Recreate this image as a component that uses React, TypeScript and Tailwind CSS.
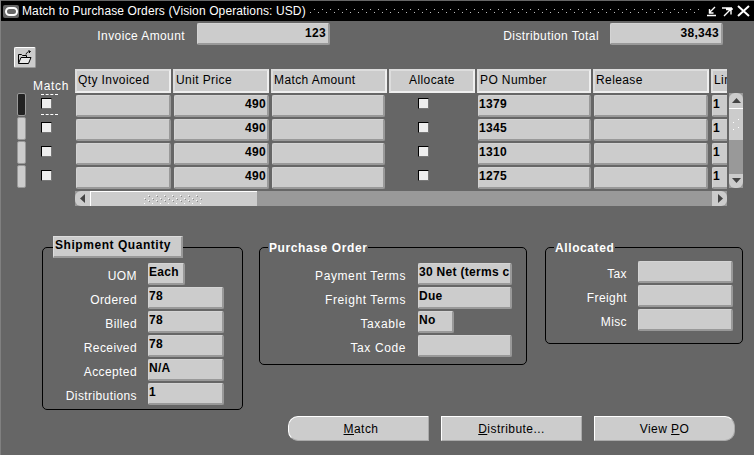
import React from "react";

function Field({ w, text, right, total }: { w: string; text?: string; right?: boolean; total?: boolean }) {
  return (
    <div className={`${w} h-[22px] shrink-0 bg-[#cccccc] border-r-2 border-b-2 border-t border-l border-r-[#999999] border-b-[#999999] border-t-[#d4d4d4] border-l-[#d4d4d4] rounded-[2px] overflow-hidden whitespace-nowrap font-bold text-[12px] tracking-[0.3px] text-black ${total ? "leading-[19px] pr-[2px]" : "leading-[16px]"} ${right ? "text-right" : ""} ${right && !total ? "pr-[1px]" : ""}`}>
      {text}
    </div>
  );
}

function Label({ w, children, wide }: { w: string; children: React.ReactNode; wide?: boolean }) {
  return <div className={`${w} shrink-0 text-right text-white text-[12px] ${wide ? "tracking-[0.6px]" : "tracking-[0.4px]"} leading-[22px] pt-[2px] whitespace-nowrap`}>{children}</div>;
}

function Header({ w, children, center }: { w: string; children: React.ReactNode; center?: boolean }) {
  return (
    <div className={`${w} h-[24px] shrink-0 pr-[2px]`}>
      <div className={`h-full overflow-hidden bg-[#cccccc] border-2 border-[#efefef] border-t-[#dddddd] border-l-[#dddddd] text-black text-[12px] tracking-[0.4px] leading-[18px] whitespace-nowrap ${center ? "text-center" : "pl-[1px]"}`}>{children}</div>
    </div>
  );
}

function Check() {
  return <div className="w-[11px] h-[11px] bg-[#eeeeee] border border-black border-r-[#777777] border-b-[#777777]" />;
}

function Row({ price, po, line }: { price: string; po: string; line: string }) {
  return (
    <div className="flex h-[24px]">
      <div className="w-[98px] pl-[1px]"><Field w="w-[95px]" /></div>
      <div className="w-[98px] pl-[1px]"><Field w="w-[95px]" text={price} right /></div>
      <div className="w-[118px] pl-[1px]"><Field w="w-[113px]" /></div>
      <div className="w-[88px] pl-[29px] pt-[3px]"><Check /></div>
      <div className="w-[116px] pl-[1px]"><Field w="w-[113px]" text={po} /></div>
      <div className="w-[118px] pl-[1px]"><Field w="w-[114px]" /></div>
      <div className="w-[16px] pl-[1px]"><Field w="w-[30px]" text={line} /></div>
    </div>
  );
}

function Indicator({ on }: { on?: boolean }) {
  return <div className={`w-[9px] h-[23px] mb-[1px] rounded-[2px] border border-[#999999] ${on ? "bg-[#222222]" : "bg-[#cccccc]"}`} />;
}

function Group({ w, h, legend, children, pt }: { w: string; h: string; legend: React.ReactNode; children: React.ReactNode; pt: string }) {
  return (
    <div className={`relative ${w} ${h} ${pt} shrink-0 border border-black rounded-[5px]`}>
      {legend}
      {children}
    </div>
  );
}

function Legend({ children, pos }: { children: React.ReactNode; pos: string }) {
  return <div className={`absolute ${pos} -top-[7px] h-[14px] bg-[#666666] px-[1px] font-bold text-white text-[12px] tracking-[0.6px] leading-[14px] whitespace-nowrap`}>{children}</div>;
}

function Grip({ id, w, h }: { id: string; w: number; h: number }) {
  return (
    <svg width={w} height={h} viewBox={`0 0 ${w} ${h}`}>
      <defs>
        <pattern id={id} width="8" height="5" patternUnits="userSpaceOnUse">
          <rect x="0" y="3" width="1" height="1" fill="#ffffff" />
          <rect x="1" y="4" width="1" height="1" fill="#888888" />
          <rect x="4" y="0" width="1" height="1" fill="#ffffff" />
          <rect x="5" y="1" width="1" height="1" fill="#888888" />
        </pattern>
      </defs>
      <rect width={w} height={h} fill={`url(#${id})`} />
    </svg>
  );
}

function Btn({ children, cls }: { children: React.ReactNode; cls: string }) {
  return (
    <div className={`w-[141px] h-[25px] bg-[#cccccc] border-t border-l border-white border-b border-r border-b-[#aaaaaa] border-r-[#aaaaaa] ${cls} flex items-center justify-center text-black text-[12px] tracking-[0.45px]`}>
      {children}
    </div>
  );
}

export default function App() {
  return (
    <div className="w-[754px] h-[455px] overflow-hidden bg-[#666666] flex flex-col border-l border-[#808080]" style={{ fontFamily: '"Liberation Sans", Arial, sans-serif' }}>
      {/* title bar */}
      <div className="mt-[1px] h-[20px] -ml-[1px] bg-black flex items-center shrink-0 text-white text-[12px] tracking-[0.12px] whitespace-nowrap">
        <div className="ml-[3px] w-[16px] h-[13px] bg-[#666666] rounded-[2px] flex items-center justify-center">
          <div className="w-[13px] h-[9px] rounded-[5px] border-2 border-white" />
        </div>
        <span className="ml-[3px]">Match to Purchase Orders (Vision Operations: USD)</span>
        <div className="ml-[4px] w-[392px] h-[8px]">
          <svg width="392" height="8" viewBox="0 0 392 8">
            <defs>
              <pattern id="tb" width="8" height="6" patternUnits="userSpaceOnUse">
                <rect x="0" y="5" width="1" height="1" fill="#bbbbbb" />
                <rect x="4" y="2" width="1" height="1" fill="#bbbbbb" />
              </pattern>
            </defs>
            <rect width="392" height="8" fill="url(#tb)" />
          </svg>
        </div>
        <svg className="ml-auto mr-[4px]" width="46" height="16" viewBox="0 0 46 16" fill="none" stroke="#ffffff" strokeWidth="1.4">
          <path d="M3 12.500h9M11 4l-6 6M5.500 6v4h4" />
          <path d="M18 5h10M28 5v2M20 13l7-7M22 6.500h5v5" />
          <path d="M34 3l11 10M45 3l-11 10" strokeWidth="2" />
        </svg>
      </div>

      {/* totals */}
      <div className="flex mt-[2px] shrink-0">
        <Label w="w-[184px]">Invoice Amount</Label>
        <div className="ml-[12px]"><Field w="w-[133px]" text="123" right total /></div>
        <Label w="w-[269px]">Distribution Total</Label>
        <div className="ml-[11px]"><Field w="w-[113px]" text="38,343" right total /></div>
      </div>

      {/* toolbar */}
      <div className="ml-[13px] w-[22px] h-[21px] shrink-0 bg-[#cccccc] border-t border-l border-white border-b border-r border-b-[#999999] border-r-[#999999] rounded-[2px] flex items-center justify-center">
        <svg width="16" height="15" viewBox="0 0 16 15" fill="none" stroke="#000000" strokeWidth="1">
          <path d="M1.500 13.500v-9h3l1 1h4v2" />
          <path d="M1.500 13.500l2.500-6h10l-2.500 6z" fill="#e8e8e8" />
          <path d="M9 4.500c.5-2 2-3 4-3M11.500 0.500l2 1-1.500 1.500" />
        </svg>
      </div>

      {/* table */}
      <div className="flex items-start mt-[1px] shrink-0">
        <div className="w-[74px] shrink-0">
          <div className="h-[24px] flex items-end pl-[32px] text-white text-[12px] tracking-[0.7px] leading-[14px]">Match</div>
          <div className="flex">
            <div className="ml-[16px] w-[9px]">
              <Indicator on />
              <Indicator />
              <Indicator />
              <Indicator />
            </div>
            <div className="ml-[15px]">
              <div className="h-[24px] relative pt-[5px]">
                <div className="absolute left-0 top-[1px] w-[17px] border-t border-dashed border-white" />
                <div className="absolute left-0 bottom-[2px] w-[17px] border-t border-dashed border-white" />
                <Check />
              </div>
              <div className="h-[24px] pt-[5px]"><Check /></div>
              <div className="h-[24px] pt-[5px]"><Check /></div>
              <div className="h-[24px] pt-[5px]"><Check /></div>
            </div>
          </div>
        </div>
        <div className="w-[652px] shrink-0 overflow-hidden">
          <div className="flex">
            <Header w="w-[98px]">Qty Invoiced</Header>
            <Header w="w-[98px]">Unit Price</Header>
            <Header w="w-[118px]">Match Amount</Header>
            <Header w="w-[88px]" center>Allocate</Header>
            <Header w="w-[116px]">PO Number</Header>
            <Header w="w-[118px]">Release</Header>
            <Header w="w-[40px]">Line</Header>
          </div>
          <div className="mt-[2px]">
            <Row price="490" po="1379" line="1" />
            <Row price="490" po="1345" line="1" />
            <Row price="490" po="1310" line="1" />
            <Row price="490" po="1275" line="1" />
          </div>
          <div className="h-[15px] bg-[#999999] flex">
            <div className="w-[15px] bg-[#cccccc] rounded-l-[6px] flex items-center justify-center">
              <svg width="8" height="9" viewBox="0 0 8 9"><path d="M6 0v9L1 4.500z" fill="#444444" /></svg>
            </div>
            <div className="w-[167px] bg-[#cccccc] border-t border-white border-l flex items-center justify-center">
              <Grip id="gh" w={60} h={9} />
            </div>
            <div className="flex-1" />
            <div className="w-[15px] bg-[#cccccc] rounded-r-[6px] flex items-center justify-center">
              <svg width="8" height="9" viewBox="0 0 8 9"><path d="M2 0v9l5-4.500z" fill="#444444" /></svg>
            </div>
          </div>
        </div>
        <div className="ml-[2px] mt-[24px] w-[14px] h-[95px] bg-[#999999] flex flex-col shrink-0">
          <div className="h-[15px] bg-[#cccccc] rounded-t-[6px] flex items-center justify-center">
            <svg width="9" height="6" viewBox="0 0 9 6"><path d="M0 5h9L4.500 0z" fill="#444444" /></svg>
          </div>
          <div className="h-[32px] bg-[#cccccc] border-t border-white flex items-center justify-center">
            <svg width="6" height="12" viewBox="0 0 6 12" fill="#ffffff">
              <rect x="5" y="0" width="1" height="1" />
              <rect x="0" y="3" width="1" height="1" />
              <rect x="5" y="8" width="1" height="1" />
              <rect x="0" y="10" width="1" height="1" />
            </svg>
          </div>
          <div className="flex-1" />
          <div className="h-[14px] bg-[#cccccc] rounded-b-[6px] flex items-center justify-center">
            <svg width="9" height="6" viewBox="0 0 9 6"><path d="M0 0h9L4.500 5z" fill="#444444" /></svg>
          </div>
        </div>
      </div>

      {/* groups */}
      <div className="flex items-start mt-[41px] ml-[41px] shrink-0">
        <Group w="w-[201px]" h="h-[163px]" pt="pt-[15px]" legend={
          <div className="absolute left-[10px] -top-[12px] w-[130px] h-[22px] bg-[#cccccc] border-r-2 border-b-2 border-r-[#999999] border-b-[#999999] border-t border-l border-t-[#dddddd] border-l-[#dddddd] font-bold text-black text-[12px] tracking-[0.55px] leading-[17px] pl-[1px] whitespace-nowrap z-10">Shipment Quantity</div>
        }>
          {[["UOM", "Each"], ["Ordered", "78"], ["Billed", "78"], ["Received", "78"], ["Accepted", "N/A"], ["Distributions", "1"]].map(([l, v], i) => (
            <div key={l} className="flex h-[24px]">
              <Label w="w-[94px]">{l}</Label>
              <div className="ml-[11px]"><Field w={i === 0 ? "w-[37px]" : "w-[76px]"} text={v} /></div>
            </div>
          ))}
        </Group>
        <div className="ml-[16px]">
          <Group w="w-[268px]" h="h-[118px]" pt="pt-[15px]" legend={<Legend pos="left-[8px]">Purchase Order</Legend>}>
            {[["Payment Terms", "30 Net (terms c"], ["Freight Terms", "Due"], ["Taxable", "No"], ["Tax Code", ""]].map(([l, v], i) => (
              <div key={l} className="flex h-[24px]">
                <Label w="w-[146px]" wide>{l}</Label>
                <div className="ml-[12px]"><Field w={i === 2 ? "w-[36px]" : "w-[94px]"} text={v} /></div>
              </div>
            ))}
          </Group>
        </div>
        <div className="ml-[18px]">
          <Group w="w-[198px]" h="h-[97px]" pt="pt-[13px]" legend={<Legend pos="left-[8px]">Allocated</Legend>}>
            {["Tax", "Freight", "Misc"].map((l) => (
              <div key={l} className="flex h-[24px]">
                <Label w="w-[81px]">{l}</Label>
                <div className="ml-[11px]"><Field w="w-[95px]" /></div>
              </div>
            ))}
          </Group>
        </div>
      </div>

      {/* buttons */}
      <div className="relative shrink-0">
        <div className="absolute right-[19px] top-[6px] flex gap-[12px]">
          <Btn cls="rounded-l-[10px] pl-[5px]"><span><u>M</u>atch</span></Btn>
          <Btn cls=""><span><u>D</u>istribute...</span></Btn>
          <Btn cls="rounded-r-[10px]"><span>View <u>P</u>O</span></Btn>
        </div>
      </div>
    </div>
  );
}
